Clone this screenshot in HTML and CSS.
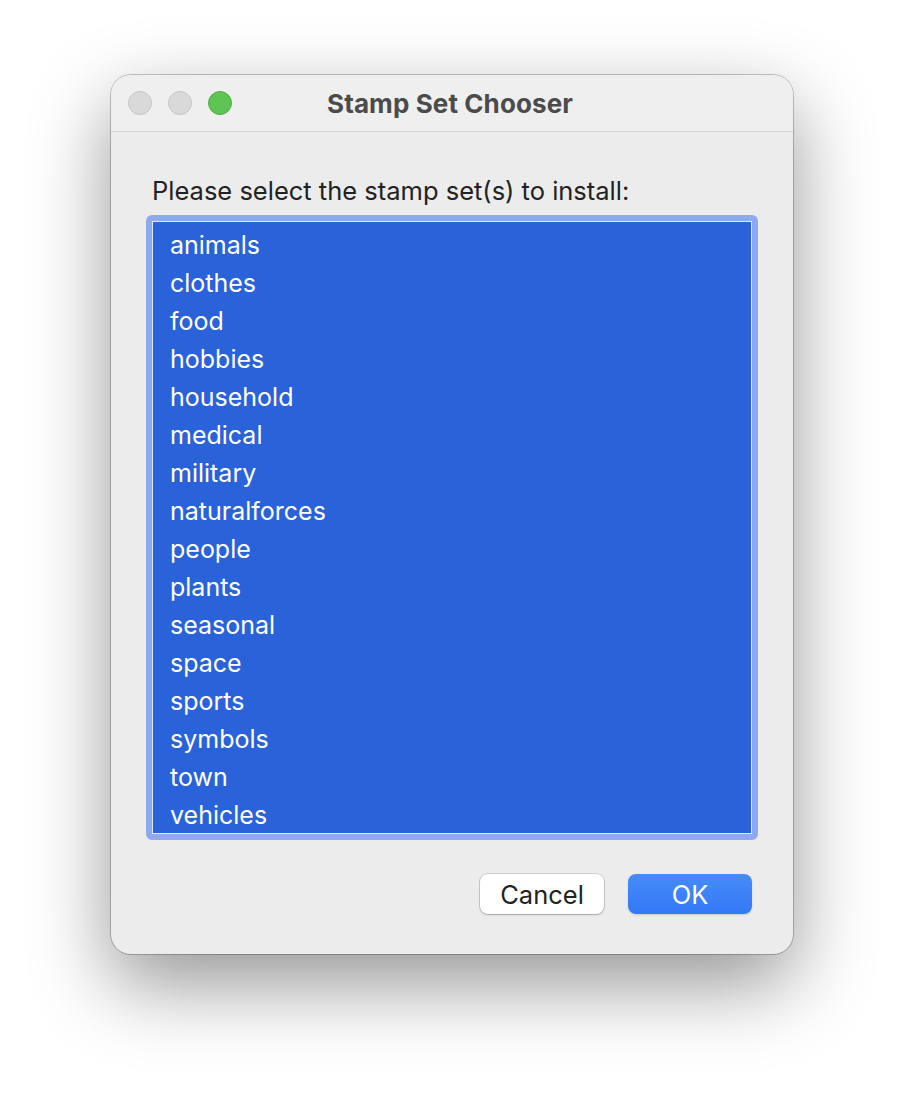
FILE: index.html
```html
<!DOCTYPE html>
<html lang="en">
<head>
    <meta charset="UTF-8">
    <meta name="viewport" content="width=device-width, initial-scale=1.0">
    <title>Stamp Set Chooser</title>
    <link rel="stylesheet" href="styles.css">
</head>
<body>

    <div class="window">
        <div class="titlebar">
            <div class="lights">
                <span class="light"></span>
                <span class="light"></span>
                <span class="light green"></span>
            </div>
            <div class="title">Stamp Set Chooser</div>
        </div>

        <div class="content">
            <p class="prompt">Please select the stamp set(s) to install:</p>

            <div class="list-ring">
                <ul class="list">
                    <li>animals</li>
                    <li>clothes</li>
                    <li>food</li>
                    <li>hobbies</li>
                    <li>household</li>
                    <li>medical</li>
                    <li>military</li>
                    <li>naturalforces</li>
                    <li>people</li>
                    <li>plants</li>
                    <li>seasonal</li>
                    <li>space</li>
                    <li>sports</li>
                    <li>symbols</li>
                    <li>town</li>
                    <li>vehicles</li>
                </ul>
            </div>

            <div class="buttons">
                <button class="btn">Cancel</button>
                <button class="btn primary">OK</button>
            </div>
        </div>
    </div>

</body>
</html>
```

FILE: styles.css
```css
html {
    background: #ffffff;
}

body {
    margin: 0;
    padding: 75px 0 0 111px;
    min-height: 1102px;
    box-sizing: border-box;
    background: #ffffff;
    font-family: 'Inter', 'Noto Sans', sans-serif;
}

.window {
    width: 682px;
    height: 879px;
    box-sizing: border-box;
    background: #ececec;
    border-radius: 20px;
    box-shadow: 0 0 0 1px rgba(0, 0, 0, 0.22), 0 30px 80px rgba(0, 0, 0, 0.42);
    overflow: hidden;
}

/* title bar */
.titlebar {
    position: relative;
    height: 56px;
    background: #efefef;
    border-bottom: 1px solid #d4d4d4;
    display: flex;
    align-items: center;
    justify-content: center;
}

.lights {
    position: absolute;
    left: 17px;
    top: 16px;
    display: flex;
    gap: 16px;
}

.light {
    width: 22px;
    height: 22px;
    border-radius: 50%;
    background: #d9d9d9;
    border: 1px solid #c4c4c4;
}

.light.green {
    background: #5fc454;
    border-color: #4fae45;
}

.title {
    font-size: 26px;
    font-weight: 700;
    color: #4b4b4b;
    letter-spacing: 0.1px;
    padding-right: 4px;
}

/* dialog body */
.content {
    padding: 0 35px;
}

.prompt {
    margin: 43px 0 0 6px;
    height: 40px;
    font-size: 25.5px;
    color: #222222;
}

.list-ring {
    padding: 6px;
    background: #8eaaee;
    border-radius: 6px;
}

.list {
    list-style: none;
    margin: 0;
    padding: 4px 0 0;
    height: 607px;
    overflow: hidden;
    background: #2962d9;
    border: 1px solid #e2e6ef;
}

.list li {
    height: 38px;
    line-height: 38px;
    padding-left: 17px;
    font-size: 25px;
    color: #ffffff;
}

.buttons {
    display: flex;
    justify-content: flex-end;
    gap: 24px;
    margin-top: 34px;
    padding-right: 6px;
}

.btn {
    width: 124px;
    height: 40px;
    border: none;
    border-radius: 8px;
    font-family: inherit;
    font-size: 25.5px;
    color: #222222;
    background: #ffffff;
    box-shadow: 0 0 0 1px rgba(0, 0, 0, 0.12), 0 1px 2px rgba(0, 0, 0, 0.2);
}

.btn.primary {
    color: #ffffff;
    background: linear-gradient(#468cf8, #3479f6);
    box-shadow: 0 1px 2px rgba(0, 0, 0, 0.15);
}
```
